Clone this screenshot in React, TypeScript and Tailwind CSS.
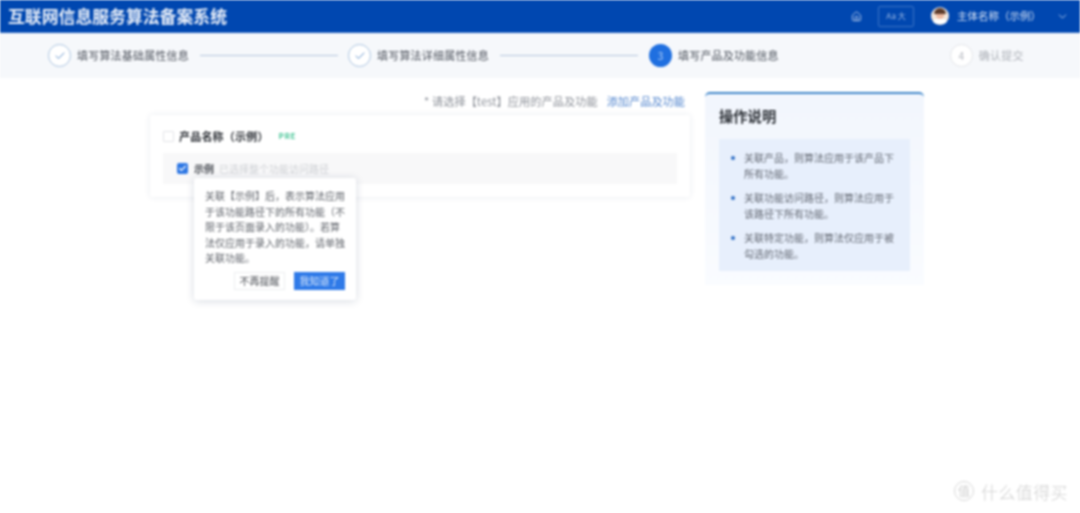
import { Check, ChevronDown, Home } from "lucide-react";

const font = { fontFamily: '"Noto Sans CJK SC", "Noto Sans", sans-serif' };

function DoneStep({ label }: { label: string }) {
  return (
    <div className="flex items-center shrink-0">
      <div className="w-[23px] h-[23px] rounded-full border border-[#a9c3e0] flex items-center justify-center bg-white">
        <Check className="w-[12px] h-[12px] text-[#4f86c6]" strokeWidth={1.8} />
      </div>
      <span className="ml-[6px] text-[11px] tracking-[0.2px] text-[#4f545e] leading-none">{label}</span>
    </div>
  );
}

const tips = [
  "关联产品，则算法应用于该产品下所有功能。",
  "关联功能访问路径，则算法应用于该路径下所有功能。",
  "关联特定功能，则算法仅应用于被勾选的功能。",
];

export default function App() {
  return (
    <div style={font} className="relative w-[1080px] h-[513px] overflow-hidden bg-white blur-[0.8px]">
      <header className="h-[33px] bg-[#0047b0] border-b border-[#2f6cc4] flex items-center pl-[8px] pr-[11px] text-white">
        <h1 className="text-[16.85px] font-bold leading-none text-[#e6edf8]">互联网信息服务算法备案系统</h1>
        <div className="ml-auto flex items-center text-[#c9d8ef]">
          <Home className="w-[11px] h-[11px]" strokeWidth={1.8} />
          <div className="ml-[16px] w-[36px] h-[21px] border border-[#3c74c6] rounded-[2px] flex items-center justify-center text-[8px] leading-none text-[#9fbce6]">
            Aa 大
          </div>
          <div className="ml-[17px] w-[18px] h-[18px] rounded-full bg-[#f3e7dc] overflow-hidden flex flex-col items-center">
            <div className="w-[12px] h-[6px] mt-[1px] rounded-t-full bg-[#5c3a2a]" />
            <div className="w-[8px] h-[5px] bg-[#eeb9a0] rounded-b-full" />
            <div className="w-[16px] h-[5px] bg-white rounded-t-full" />
          </div>
          <span className="ml-[8px] text-[10.5px] leading-none text-[#d5e1f3]">主体名称（示例）</span>
          <ChevronDown className="ml-[15px] w-[13px] h-[13px] text-[#a9c3e8]" strokeWidth={1.8} />
        </div>
      </header>

      <nav className="h-[45px] bg-[#f6f8fb] flex items-center pl-[48px]">
        <DoneStep label="填写算法基础属性信息" />
        <div className="h-px w-[138px] ml-[11px] mr-[10px] bg-[#b4c6dc] shrink-0" />
        <DoneStep label="填写算法详细属性信息" />
        <div className="h-px w-[138px] mx-[11px] bg-[#b4c6dc] shrink-0" />
        <div className="flex items-center shrink-0">
          <div className="w-[23px] h-[23px] rounded-full bg-[#1f6fe0] flex items-center justify-center text-[10px] text-[#b8d2f6] leading-none">
            3
          </div>
          <span className="ml-[6px] text-[11px] tracking-[0.2px] text-[#4c525c] leading-none">填写产品及功能信息</span>
        </div>
        <div className="flex items-center shrink-0 ml-[171px]">
          <div className="w-[23px] h-[23px] rounded-full border border-[#e3e5e9] bg-white flex items-center justify-center text-[10px] text-[#b5b9c0] leading-none">
            4
          </div>
          <span className="ml-[6px] text-[11px] tracking-[0.2px] text-[#aeb2b9] leading-none">确认提交</span>
        </div>
      </nav>

      <main className="flex items-start pl-[150px] pt-[14px]">
        <div className="w-[540px] shrink-0">
          <div className="h-[23px] pb-[4px] pr-[5px] flex items-center justify-end text-[11.2px] leading-none">
            <span className="text-[#8f939b] tracking-[0.05px]">* 请选择【test】应用的产品及功能</span>
            <span className="ml-[9px] text-[#5688cf]">添加产品及功能</span>
          </div>
          <section className="relative h-[82px] rounded-[3px] bg-white shadow-[0_0_6px_rgba(40,70,120,0.10)] px-[13px]">
            <div className="h-[38px] pt-[4px] flex items-center">
              <div className="w-[11px] h-[11px] border border-[#e2e4e8] rounded-[1px] bg-white" />
              <span className="ml-[5px] text-[11px] tracking-[0.2px] font-bold text-[#2c3036] leading-none">产品名称（示例）</span>
              <span className="ml-[10px] text-[8px] tracking-[0.5px] font-bold text-[#4cc79a] leading-none">PRE</span>
            </div>
            <div className="h-[31px] bg-[#f8f8f9] flex items-center pl-[14px]">
              <div className="w-[11px] h-[11px] rounded-[2px] bg-[#2f78e4] flex items-center justify-center">
                <Check className="w-[9px] h-[9px] text-white" strokeWidth={3} />
              </div>
              <span className="ml-[6px] text-[10px] font-bold text-[#4a4e55] leading-none">示例</span>
              <span className="ml-[5px] text-[10px] text-[#cfd1d5] leading-none">已选择整个功能访问路径</span>
            </div>
            <div className="absolute left-[44px] top-[63px] w-[162px] h-[122px] bg-white rounded-[3px] shadow-[0_1px_8px_rgba(30,50,90,0.18)] pt-[10px] px-[11px]">
              <p className="text-[10px] leading-[15.5px] text-[#62666d]">
                关联【示例】后，表示算法应用于该功能路径下的所有功能（不限于该页面录入的功能）。若算法仅应用于录入的功能，请单独关联功能。
              </p>
              <div className="flex justify-end items-center mt-[6px]">
                <div className="w-[51px] h-[18px] border border-[#eceef0] flex items-center justify-center text-[10px] text-[#4d5157] leading-none">
                  不再提醒
                </div>
                <div className="ml-[9px] w-[51px] h-[18px] bg-[#2f7ae8] flex items-center justify-center text-[10px] text-[#d5e5fb] leading-none">
                  我知道了
                </div>
              </div>
            </div>
          </section>
        </div>

        <aside className="ml-[15px] w-[219px] h-[193px] shrink-0 rounded-t-[5px] border-t-2 border-[#3f86c9] bg-gradient-to-b from-[#f2f6fd] to-[#fafcff] px-[14px]">
          <h2 className="mt-[15px] text-[14.3px] font-bold text-[#2e3238] leading-none">操作说明</h2>
          <ul className="mt-[16px] h-[132px] bg-[#e7effc] pl-[12px] pr-[11px] pt-[11px] flex flex-col gap-[8px]">
            {tips.map((t) => (
              <li key={t} className="flex items-start text-[10px] leading-[16px] text-[#666b75]">
                <span className="mt-[6px] w-[4px] h-[4px] rounded-full bg-[#2f6fc4] shrink-0" />
                <span className="ml-[9px]">{t}</span>
              </li>
            ))}
          </ul>
        </aside>
      </main>

      <div className="absolute left-[954px] top-[481px] flex items-center text-[#d0d0d0]">
        <div className="w-[20px] h-[20px] rounded-full border border-[#d8d8d8] flex items-center justify-center text-[12px] leading-none">
          值
        </div>
        <span className="ml-[7px] text-[17px] tracking-[0.4px] leading-none font-light">什么值得买</span>
      </div>
    </div>
  );
}
